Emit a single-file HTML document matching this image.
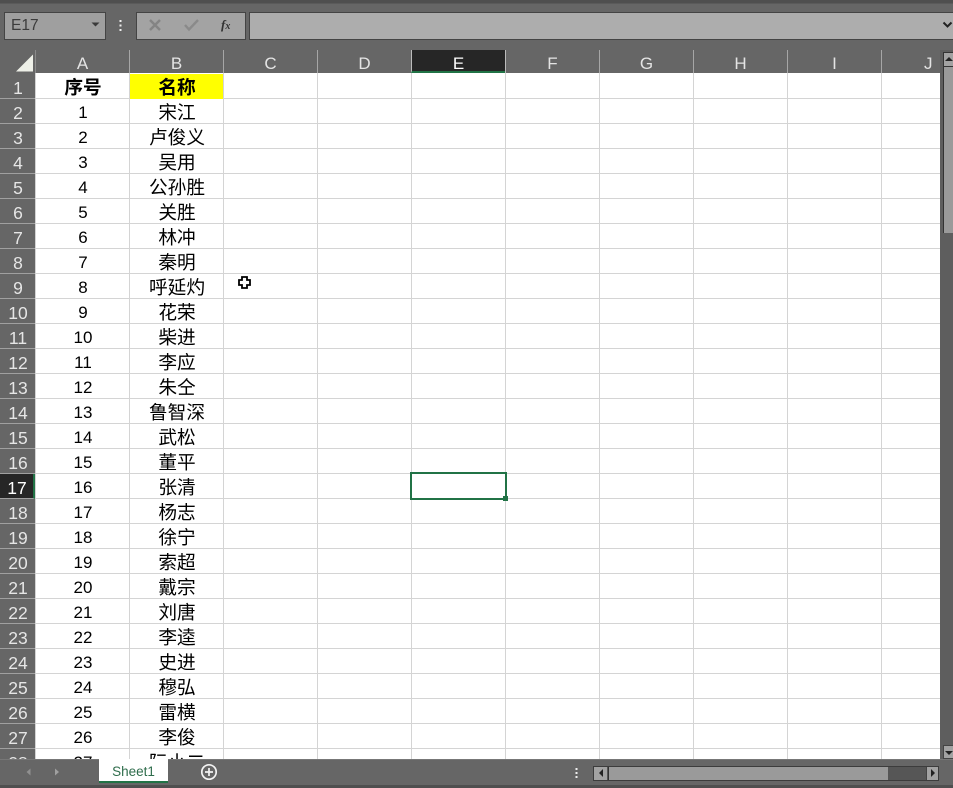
<!DOCTYPE html>
<html lang="zh">
<head>
<meta charset="utf-8">
<style>
html,body{margin:0;padding:0;width:953px;height:788px;overflow:hidden;background:#666}
body{position:relative;font-family:"Liberation Sans","Noto Sans CJK SC",sans-serif}
.a{position:absolute}
.ch{position:absolute;top:50px;height:23px;width:93px;border-left:1px solid #a6a6a6;color:#e4e4e4;font-size:17px;line-height:27px;text-align:center;box-sizing:content-box}
#rh{position:absolute;left:0;top:73px;padding-top:1px;width:35px;height:685px;overflow:hidden}
#rh div{height:24px;border-bottom:1px solid #a0a0a0;color:#e6e6e6;font-size:17.500px;line-height:28px;text-align:center;padding-left:1px}
#rh div.s{background:#262626;color:#fff;border-right:2px solid #217346}
#g{position:absolute;left:35px;top:73px;padding-top:1px;width:905px;height:685px;overflow:hidden;background:#fff;
background-image:repeating-linear-gradient(to right,#d4d4d4 0 1px,transparent 1px 94px)}
.r{height:24px;border-bottom:1px solid #d4d4d4;display:flex;padding-left:1px;line-height:28px;color:#000;font-size:18.67px;text-align:center}
.r i{font-style:normal;width:94px;display:block}
.r i:first-child{font-size:17px}
.r.h i{font-weight:bold;font-size:18.67px}
.r.h i+i{background:linear-gradient(#ff0,#ff0) 0 0/93px 100% no-repeat;height:25px}
</style>
</head>
<body>
<div class="a" style="left:0;top:0;width:953px;height:3px;background:#4f4f4f"></div>
<div class="a" style="left:0;top:3px;width:953px;height:1px;background:#5a5a5a"></div>

<div class="a" style="left:4px;top:12px;width:100px;height:26px;background:#9f9f9f;border:1px solid #444"></div>
<div class="a" style="left:11px;top:14px;color:#3c3c3c;font-size:15.500px;line-height:24px">E17</div>
<svg class="a" style="left:90px;top:21px" width="12" height="8"><path d="M1.500 1.500H9.500L5.500 5.500Z" fill="#3a3a3a"/></svg>
<svg class="a" style="left:118px;top:19px" width="6" height="14"><rect x="1.500" y="1" width="2" height="2" fill="#eee"/><rect x="1.500" y="5.500" width="2" height="2" fill="#eee"/><rect x="1.500" y="10" width="2" height="2" fill="#eee"/></svg>

<div class="a" style="left:136px;top:12px;width:108px;height:26px;background:#a3a3a3;border:1px solid #444"></div>
<svg class="a" style="left:148px;top:18px" width="14" height="14"><path d="M2 2L12 12M12 2L2 12" stroke="#848484" stroke-width="2.400" fill="none"/></svg>
<svg class="a" style="left:183px;top:18px" width="17" height="14"><path d="M2 7L6 11.500L15 2" stroke="#8a8a8a" stroke-width="2.400" fill="none"/></svg>
<div class="a" style="left:221px;top:15px;font-family:'Liberation Serif',serif;font-style:italic;font-weight:bold;font-size:13px;line-height:20px;color:#333">f<span style="font-size:10px">x</span></div>

<div class="a" style="left:249px;top:12px;width:704px;height:26px;background:#adadad;border:1px solid #444;border-right:0"></div>
<svg class="a" style="left:942px;top:21px" width="11" height="9"><path d="M1.500 1.500L5.500 5.500L9.500 1.500" stroke="#222" stroke-width="2" fill="none"/></svg>

<svg class="a" style="left:14px;top:52px" width="21" height="20"><path d="M2 19.500L19 2.500V19.500Z" fill="#eef0e8"/></svg>
<div class="a" style="left:35px;top:50px;width:1px;height:23px;background:#8a8a8a"></div>

<div class="ch" style="left:36px;border-left:0;width:93px">A</div>
<div class="ch" style="left:129px">B</div>
<div class="ch" style="left:223px">C</div>
<div class="ch" style="left:317px">D</div>
<div class="ch" style="left:411px;background:#262626;color:#fff;height:21px;border-bottom:2px solid #217346;border-left-color:#bbb">E</div>
<div class="ch" style="left:505px">F</div>
<div class="ch" style="left:599px">G</div>
<div class="ch" style="left:693px">H</div>
<div class="ch" style="left:787px">I</div>
<div class="ch" style="left:881px;width:59px;overflow:hidden;text-align:left"><span style="position:absolute;left:42px">J</span></div>
<div class="a" style="left:505px;top:50px;width:1px;height:23px;background:#bbb"></div>

<div id="rh">
<div>1</div><div>2</div><div>3</div><div>4</div><div>5</div><div>6</div><div>7</div><div>8</div><div>9</div><div>10</div><div>11</div><div>12</div><div>13</div><div>14</div><div>15</div><div>16</div><div class="s">17</div><div>18</div><div>19</div><div>20</div><div>21</div><div>22</div><div>23</div><div>24</div><div>25</div><div>26</div><div>27</div><div>28</div>
</div>

<div id="g">
<div class="r h"><i>序号</i><i>名称</i></div>
<div class="r"><i>1</i><i>宋江</i></div>
<div class="r"><i>2</i><i>卢俊义</i></div>
<div class="r"><i>3</i><i>吴用</i></div>
<div class="r"><i>4</i><i>公孙胜</i></div>
<div class="r"><i>5</i><i>关胜</i></div>
<div class="r"><i>6</i><i>林冲</i></div>
<div class="r"><i>7</i><i>秦明</i></div>
<div class="r"><i>8</i><i>呼延灼</i></div>
<div class="r"><i>9</i><i>花荣</i></div>
<div class="r"><i>10</i><i>柴进</i></div>
<div class="r"><i>11</i><i>李应</i></div>
<div class="r"><i>12</i><i>朱仝</i></div>
<div class="r"><i>13</i><i>鲁智深</i></div>
<div class="r"><i>14</i><i>武松</i></div>
<div class="r"><i>15</i><i>董平</i></div>
<div class="r"><i>16</i><i>张清</i></div>
<div class="r"><i>17</i><i>杨志</i></div>
<div class="r"><i>18</i><i>徐宁</i></div>
<div class="r"><i>19</i><i>索超</i></div>
<div class="r"><i>20</i><i>戴宗</i></div>
<div class="r"><i>21</i><i>刘唐</i></div>
<div class="r"><i>22</i><i>李逵</i></div>
<div class="r"><i>23</i><i>史进</i></div>
<div class="r"><i>24</i><i>穆弘</i></div>
<div class="r"><i>25</i><i>雷横</i></div>
<div class="r"><i>26</i><i>李俊</i></div>
<div class="r"><i>27</i><i>阮小二</i></div>
</div>

<div class="a" style="left:410px;top:472px;width:93px;height:24px;border:2px solid #217346;background:transparent"></div>
<div class="a" style="left:503px;top:496px;width:5px;height:5px;background:#217346"></div>

<svg class="a" style="left:237px;top:275px" width="15" height="15"><path d="M5 2H10V5H13V10H10V13H5V10H2V5H5Z" fill="#fff" stroke="#000" stroke-width="1.800"/></svg>

<div class="a" style="left:940px;top:50px;width:13px;height:709px;background:#5e5e5e"></div>
<div class="a" style="left:943px;top:52px;width:10px;height:181px;background:#9a9a9a;box-shadow:inset 1px 0 0 #333"></div>
<div class="a" style="left:943px;top:52px;width:10px;height:15px;background:#a2a2a2;border-top:1px solid #333;border-bottom:1px solid #333;border-left:1px solid #333;box-sizing:border-box"></div>
<svg class="a" style="left:944px;top:55px" width="9" height="8"><path d="M1 6H9L5 2Z" fill="#222"/></svg>
<div class="a" style="left:943px;top:745px;width:10px;height:14px;background:#a2a2a2;border:1px solid #444;border-right:0;box-sizing:border-box"></div>
<svg class="a" style="left:944px;top:749px" width="9" height="8"><path d="M1 2H9L5 6Z" fill="#222"/></svg>

<div class="a" style="left:0;top:759px;width:953px;height:26px;background:#666;border-top:1px solid #777;box-sizing:border-box"></div>
<div class="a" style="left:0;top:785px;width:953px;height:3px;background:#4f4f4f"></div>
<svg class="a" style="left:24px;top:767px" width="10" height="10"><path d="M6.500 1.500V8.500L2.500 5Z" fill="#909090"/></svg>
<svg class="a" style="left:52px;top:767px" width="10" height="10"><path d="M3 1.500V8.500L7 5Z" fill="#a0a0a0"/></svg>
<div class="a" style="left:99px;top:759px;width:69px;height:24px;background:#fff;border-bottom:2px solid #217346;box-sizing:border-box;color:#2f6d4c;font-size:13.500px;line-height:25px;text-align:center">Sheet1</div>
<svg class="a" style="left:200px;top:763px" width="18" height="18"><circle cx="9" cy="9" r="7.200" fill="none" stroke="#f2f2f2" stroke-width="1.700"/><path d="M9 5V13M5 9H13" stroke="#f2f2f2" stroke-width="1.700"/></svg>
<svg class="a" style="left:574px;top:767px" width="6" height="12"><rect x="1.500" y="1" width="2" height="2" fill="#eee"/><rect x="1.500" y="5" width="2" height="2" fill="#eee"/><rect x="1.500" y="9" width="2" height="2" fill="#eee"/></svg>
<div class="a" style="left:593px;top:766px;width:346px;height:15px;background:#565656;border:1px solid #3c3c3c;box-sizing:border-box"></div>
<div class="a" style="left:608px;top:767px;width:280px;height:13px;background:#9a9a9a;border-left:1px solid #333;box-sizing:border-box"></div>
<div class="a" style="left:594px;top:767px;width:13px;height:13px;background:#a2a2a2"></div>
<div class="a" style="left:926px;top:767px;width:12px;height:13px;background:#a2a2a2;border-left:1px solid #444;box-sizing:border-box"></div>
<svg class="a" style="left:597px;top:768px" width="8" height="10"><path d="M6 1V9L2 5Z" fill="#222"/></svg>
<svg class="a" style="left:929px;top:768px" width="8" height="10"><path d="M2 1V9L6 5Z" fill="#222"/></svg>
</body>
</html>
